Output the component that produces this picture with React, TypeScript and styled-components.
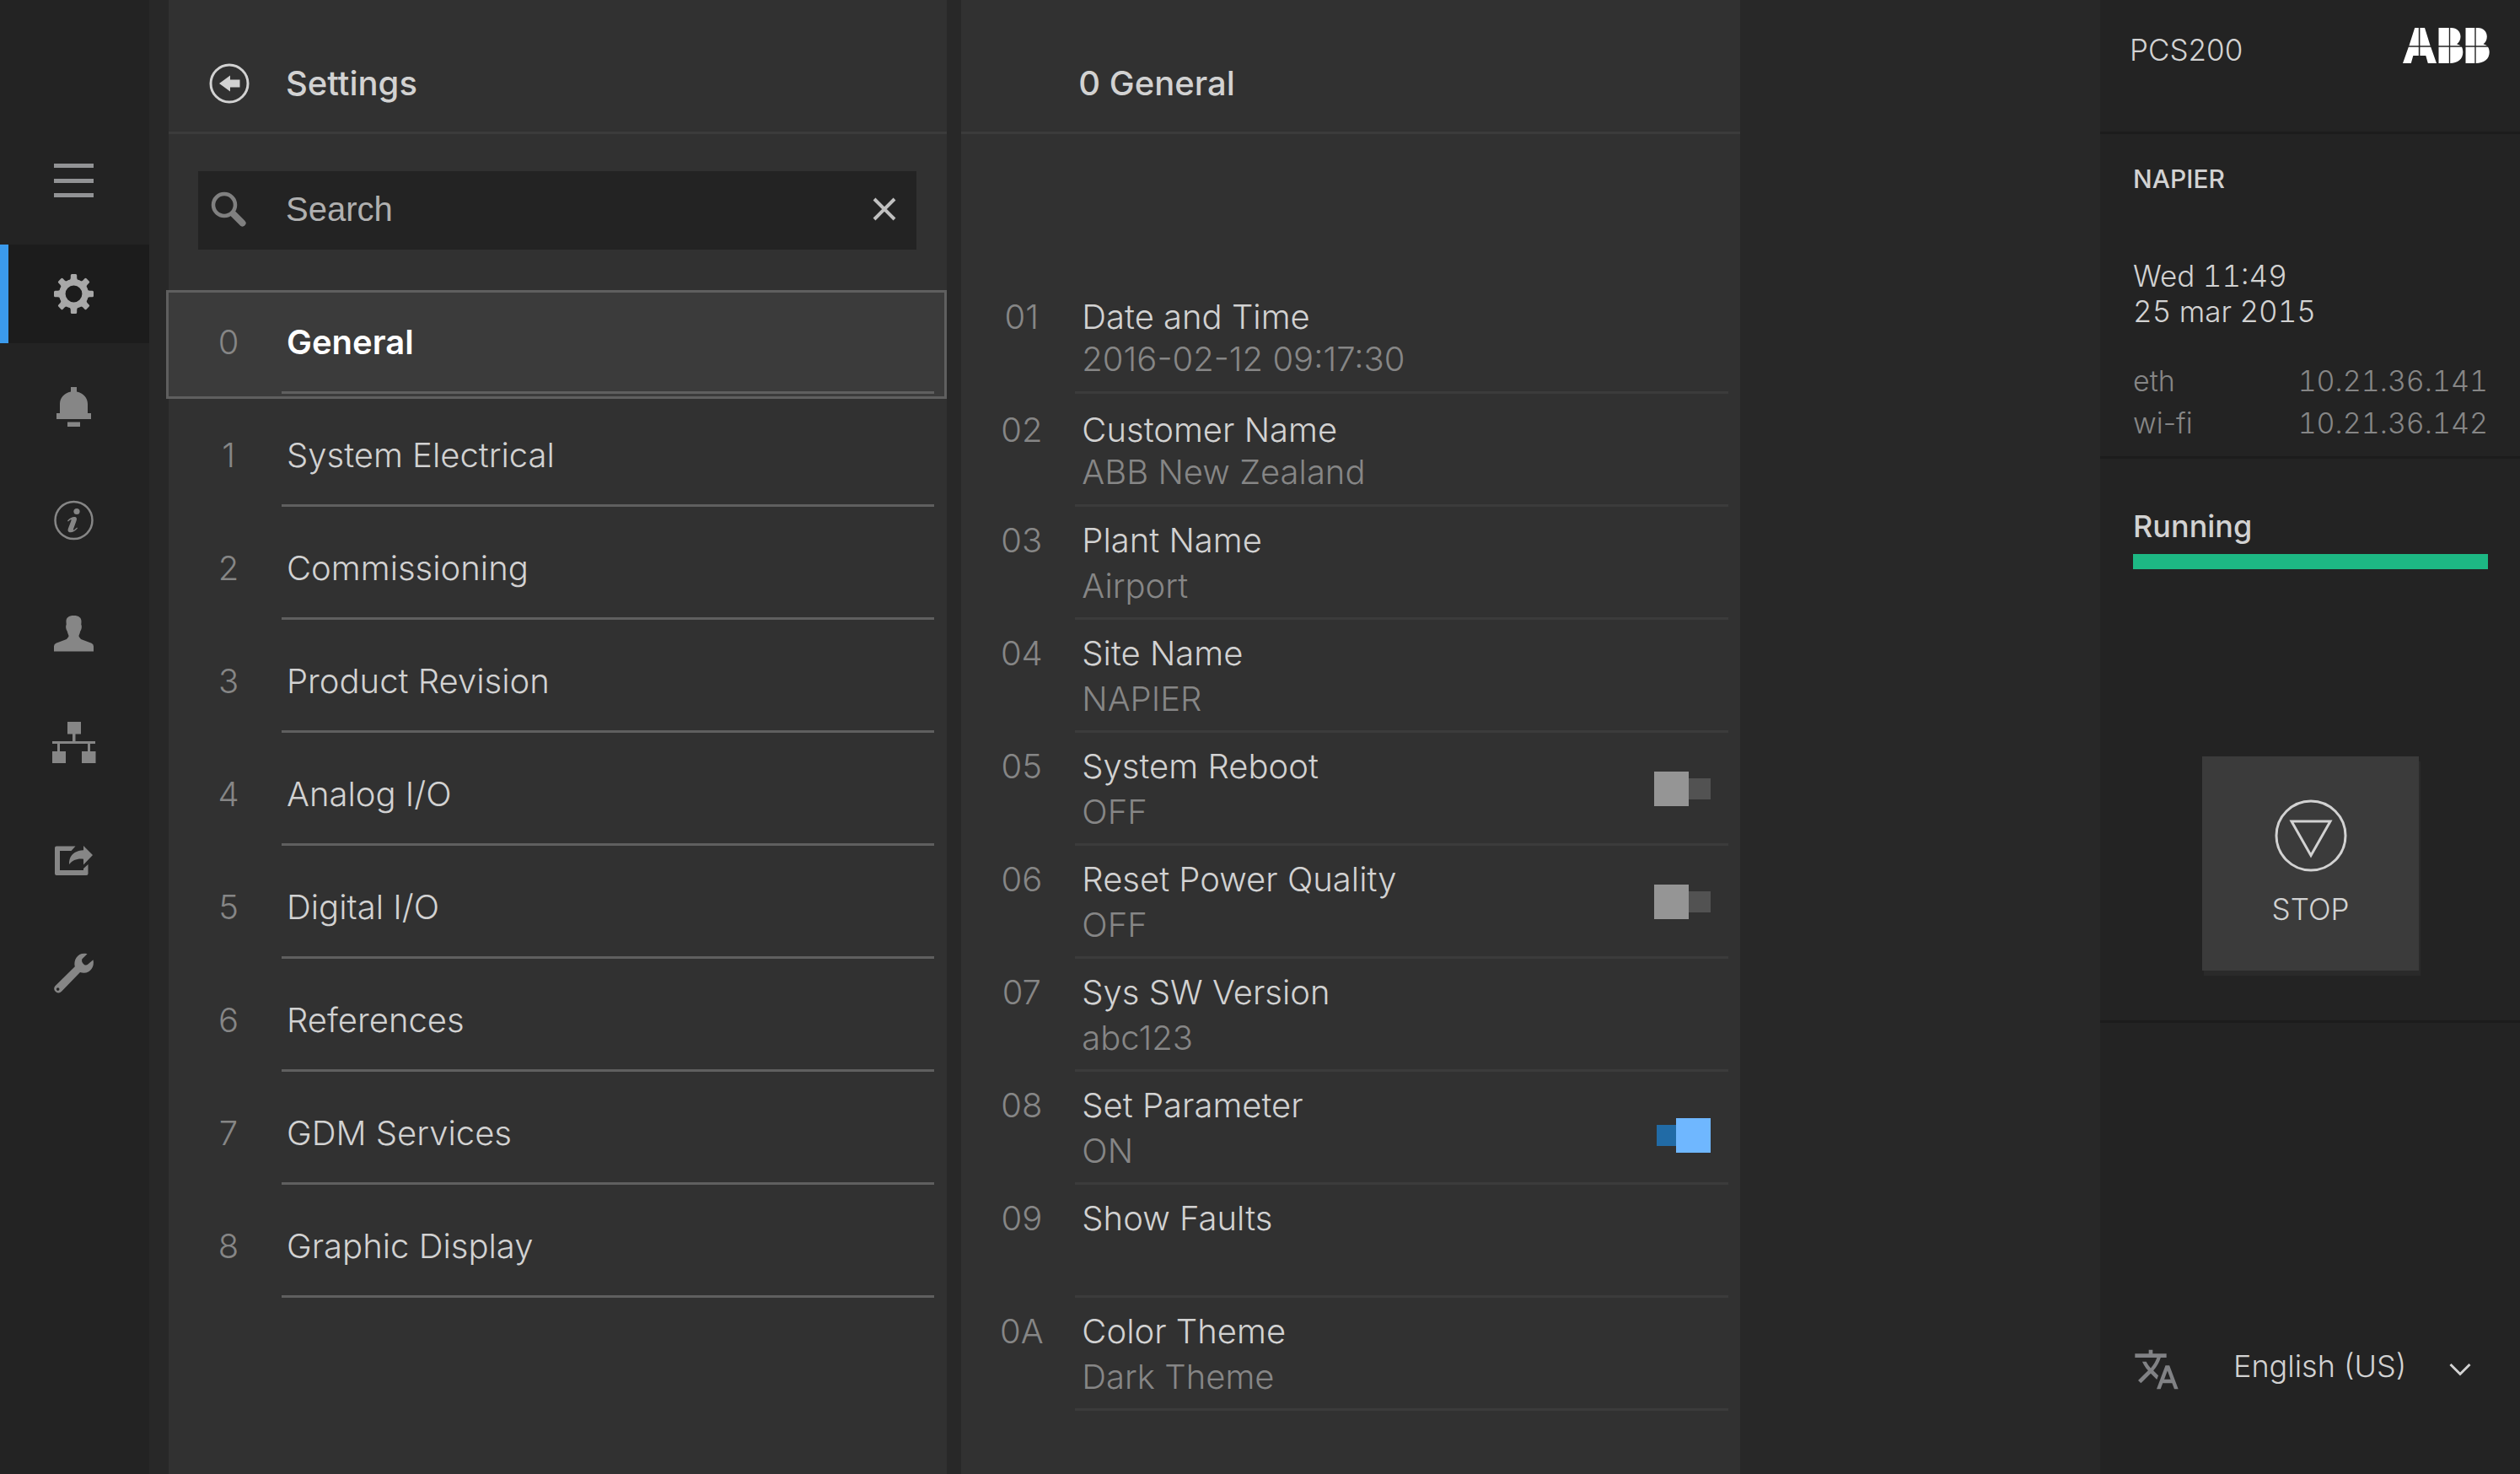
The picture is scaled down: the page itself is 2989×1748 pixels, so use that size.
import React, { useState } from "react";
import styled, { createGlobalStyle, css } from "styled-components";
import { MdTranslate } from "react-icons/md";

const color = {
  page: "#282828",
  rail: "#232323",
  railActive: "#1c1c1c",
  panel: "#313131",
  raised: "#3b3b3b",
  line: "#5f5f5f",
  text: "#d2d2d2",
  muted: "#868686",
  icon: "#868686",
  accent: "#3b9aec",
  ok: "#1db884",
};

const GlobalStyle = createGlobalStyle`
  *, *::before, *::after { box-sizing: border-box; }
  body {
    margin: 0;
    background: ${color.page};
    color: ${color.text};
    font-family: Inter, "Liberation Sans", sans-serif;
    font-size: 40px;
    font-weight: 300;
    line-height: 48px;
  }
  h1, h2, p, ul, dl, dd { margin: 0; padding: 0; }
  ul { list-style: none; }
  button, input, select { font: inherit; color: inherit; }
  button { border: 0; padding: 0; background: none; cursor: pointer; }
`;

const Shell = styled.div`
  display: grid;
  grid-template-columns: 177px minmax(0, 1fr) 498px;
  min-height: 100vh;
`;

/* ---------- navigation rail ---------- */

const Rail = styled.nav`
  display: flex;
  flex-direction: column;
  gap: 17px;
  padding-top: 156px;
  background: ${color.rail};
`;

const RailButton = styled.button<{ $active?: boolean }>`
  display: flex;
  align-items: center;
  justify-content: center;
  height: 117px;
  color: ${(p) => (p.$active ? "#a8a8a8" : color.icon)};
  ${(p) =>
    p.$active &&
    css`
      background: ${color.railActive};
      box-shadow: inset 10px 0 ${color.accent};
    `}
`;

const RailSvg = styled.svg.attrs({ viewBox: "0 0 57 57", "aria-hidden": true })`
  width: 57px;
  height: 57px;
  fill: currentColor;
`;

const MenuIcon = () => (
  <RailSvg>
    <path fill="#929395" d="M4 8h47v5H4zM4 26h47v5H4zM4 43h47v5H4z" />
  </RailSvg>
);

const GearIcon = () => (
  <RailSvg>
    <circle cx="27.5" cy="28.5" r="13.7" fill="none" stroke="currentColor" strokeWidth="7.6" />
    {[0, 45, 90, 135, 180, 225, 270, 315].map((a) => (
      <path
        key={a}
        d="M21.5 13.5Q23.8 12 23.8 9.500V6.500Q23.800 5 25.300 5H29.700Q31.200 5 31.200 6.500V9.500Q31.200 12 33.500 13.500Z"
        transform={`rotate(${a} 27.5 28.5)`}
      />
    ))}
  </RailSvg>
);

const BellIcon = () => (
  <RailSvg>
    <path d="M24 5h7v5.500C39 12 44 18 44 25V36h4v7H7v-7h4V25C11 18 16 12 24 10.500zM20 46.500h15V52H20z" />
  </RailSvg>
);

const InfoIcon = () => (
  <RailSvg>
    <circle cx="27.500" cy="29" r="22" fill="none" stroke="currentColor" strokeWidth="2.500" />
    <circle cx="31" cy="18.500" r="3.600" />
    <path d="M20 29.500C22.500 26.500 25.500 25 28 25C31 25 31.500 27 30.600 29.600L27 39.500C26.600 40.700 27.400 40.800 28.400 40L31.300 37.600L32 38.500C29.400 41.600 26.500 43.300 23.700 43.300C20.800 43.300 20 41.400 20.900 38.800L24.500 29.300C24.900 28.100 24.300 27.900 23.300 28.600L20.800 30.500Z" />
  </RailSvg>
);

const PersonIcon = () => (
  <RailSvg>
    <path d="M27.500 8C34 8 36.800 11 36.500 15.500L36.300 18.800C37.300 20 37 24 35.300 26.500C34.800 28.500 34.300 30 33.600 31.500V33L36 36L48.500 40.800Q51 42 51 44.500V50.500H4V44.500Q4 42 6.500 40.800L19 36L21.400 33V31.500C20.700 30 20.200 28.500 19.700 26.500C18 24 17.700 20 18.700 18.800L18.500 15.500C18.200 11 21 8 27.500 8Z" />
  </RailSvg>
);

const NetworkIcon = () => (
  <RailSvg>
    <path d="M20 0h16v14.500h-6.500V23H53v3h-6v9h6.500v14H37V35h7v-9H11v9h7v14H2V35h6v-9H2v-3h24v-8.500h-6z" />
  </RailSvg>
);

const ShareIcon = () => (
  <RailSvg>
    <path d="M29.500 13.500L24.500 19H11V42H39V40L44.500 35V46Q44.500 48 42.500 48H7Q5 48 5 46V15.500Q5 13.500 7 13.500Z" />
    <path d="M39 13L50 24L39 35.500V28.700C31 28 26.500 30 22 35C21.500 25 28 18.500 39 18.200Z" />
  </RailSvg>
);

const WrenchIcon = () => (
  <RailSvg>
    <path
      fillRule="evenodd"
      d="M43.500 7.200L37.200 13.600Q36.500 18 40.200 20.200Q42.500 21 44.300 19.600L50.500 14.200C52.500 22.500 47 29.800 39.500 29.700Q37 29.700 35 28.900L13 51.700A5 5 0 0 1 5.200 45.500L28.800 22.300C26.800 13.500 33 4.500 43.500 7.200ZM8.700 47.300A1.800 1.800 0 1 0 8.700 50.900A1.800 1.800 0 1 0 8.700 47.300Z"
    />
  </RailSvg>
);

const railItems = [
  { label: "Menu", Icon: MenuIcon },
  { label: "Settings", Icon: GearIcon, active: true },
  { label: "Alarms", Icon: BellIcon },
  { label: "Information", Icon: InfoIcon },
  { label: "User", Icon: PersonIcon },
  { label: "Network", Icon: NetworkIcon },
  { label: "Export", Icon: ShareIcon },
  { label: "Service", Icon: WrenchIcon },
];

/* ---------- panels ---------- */

const Main = styled.main`
  display: grid;
  grid-template-columns: 9fr 9fr 4fr;
  column-gap: 17px;
  padding-left: 23px;
`;

const Panel = styled.section`
  min-width: 0;
  background: ${color.panel};
`;

const PanelHeader = styled.header`
  display: grid;
  grid-template-columns: 139px 1fr;
  align-items: center;
  height: 159px;
  padding-top: 41px;
  border-bottom: 3px solid ${color.raised};
`;

const PanelTitle = styled.h1`
  grid-column: 2;
  font-size: 40px;
  font-weight: 500;
  line-height: 48px;
`;

const BackButton = styled.button`
  display: flex;
  justify-self: center;
  margin-left: 4px;
`;

const SearchBox = styled.label`
  display: grid;
  grid-template-columns: 104px 1fr 76px;
  align-items: center;
  height: 93px;
  margin: 44px 36px 48px 35px;
  padding-bottom: 3px;
  background: ${color.rail};
`;

const SearchInput = styled.input`
  min-width: 0;
  border: 0;
  padding: 0;
  outline: 0;
  background: none;
  font-family: "Liberation Sans", Arial, sans-serif;
  font-weight: 400;
  color: #b0b0b0;
  &::placeholder {
    color: #b0b0b0;
    opacity: 1;
  }
`;

const SearchGlyph = styled.svg`
  width: 42px;
  height: 42px;
  margin-left: 15px;
  color: #808080;
`;

const ClearButton = styled.button`
  display: flex;
  justify-content: center;
  color: #c0c0c0;
`;

const GroupList = styled.ul`
  display: flex;
  flex-direction: column;
  gap: 5px;
`;

const GroupItem = styled.li`
  display: flex;
  margin-left: -3px;
`;

const GroupButton = styled.button<{ $active: boolean }>`
  display: grid;
  grid-template-columns: 134px 1fr;
  flex: 1;
  height: 129px;
  padding: 0 12px 3px 0;
  border: 3px solid ${(p) => (p.$active ? color.line : "transparent")};
  background: ${(p) => (p.$active ? color.raised : "none")};
  text-align: left;
`;

const Code = styled.span`
  padding-left: 8px;
  text-align: center;
  color: ${color.muted};
`;

const GroupCode = styled(Code)`
  align-self: center;
  padding-bottom: 3px;
`;

const GroupLabel = styled.span<{ $active: boolean }>`
  display: flex;
  align-items: center;
  padding-left: 6px;
  border-bottom: 3px solid ${color.line};
  ${(p) =>
    p.$active &&
    css`
      color: #fff;
      font-weight: 600;
    `}
`;

const ParamList = styled.ul`
  padding-top: 174px;
`;

const ParamRow = styled.li<{ $tight?: boolean }>`
  display: grid;
  grid-template-columns: 135px 1fr;
  height: 134px;
  padding-right: 14px;
  line-height: ${(p) => (p.$tight ? "50px" : "54px")};
  & > * {
    padding-top: ${(p) => (p.$tight ? "18px" : "13px")};
  }
`;

const ParamBody = styled.div`
  display: flex;
  justify-content: space-between;
  padding-left: 8px;
  padding-right: 21px;
  border-bottom: 3px solid ${color.raised};
`;

const ParamValue = styled.p`
  color: ${color.muted};
`;

const Switch = styled.input.attrs({ type: "checkbox", role: "switch" })`
  appearance: none;
  display: flex;
  align-items: center;
  justify-content: flex-start;
  width: 67px;
  height: 41px;
  margin: 33px 0 0;
  background: linear-gradient(#525252, #525252) right center / 64px 25px no-repeat;
  &::before {
    content: "";
    width: 41px;
    height: 41px;
    background: #959595;
  }
  &:checked {
    justify-content: flex-end;
    margin-top: 42px;
    background-image: linear-gradient(#216ba6, #216ba6);
  }
  &:checked::before {
    background: #6fb7ff;
  }
`;

/* ---------- status column ---------- */

const Status = styled.aside`
  display: flex;
  flex-direction: column;
  background: ${color.rail};
  font-size: 35px;
  line-height: 42px;
`;

const Block = styled.section`
  padding: 0 38px 0 39px;
  border-bottom: 3px solid ${color.railActive};
`;

const Brand = styled(Block)`
  display: flex;
  justify-content: space-between;
  align-items: flex-start;
  height: 159px;
  padding: 33px 36px 0 35px;
`;

const ProductName = styled.p`
  padding-top: 5px;
`;

const SiteInfo = styled(Block)`
  height: 385px;
  padding-top: 32px;
`;

const SiteName = styled.h2`
  font-size: 30px;
  font-weight: 500;
  line-height: 42px;
`;

const Clock = styled.p`
  padding-top: 73px;
  font-variant-numeric: tabular-nums;
`;

const Addresses = styled.dl`
  display: grid;
  grid-template-columns: auto auto;
  justify-content: space-between;
  padding-top: 37px;
  font-size: 34px;
  line-height: 50px;
  color: ${color.muted};
`;

const Address = styled.dd`
  font-variant-numeric: tabular-nums;
`;

const RunBlock = styled(Block)`
  height: 669px;
  padding-top: 59px;
`;

const RunState = styled.h2`
  font-size: 36px;
  font-weight: 500;
  line-height: 42px;
`;

const RunBar = styled.div`
  height: 18px;
  margin: 12px 0 222px;
  background: ${color.ok};
`;

const StopButton = styled.button`
  display: flex;
  flex-direction: column;
  align-items: center;
  gap: 23px;
  width: 257px;
  height: 254px;
  margin: 0 auto;
  padding-top: 51px;
  background: ${color.raised};
  box-shadow: 2px 6px #2a2a2a;
`;

const LanguageField = styled.div`
  display: grid;
  grid-template-columns: 119px 1fr 26px;
  align-items: center;
  margin-top: auto;
  padding: 0 58px 96px 39px;
`;

const LanguageLabel = styled.label`
  display: flex;
  grid-area: 1 / 1;
  color: #818285;
`;

const LanguageSelect = styled.select`
  grid-area: 1 / 2 / 2 / 4;
  align-self: start;
  appearance: none;
  border: 0;
  padding: 0;
  background: none;
  font-size: 36px;
  line-height: 48px;
`;

const Chevron = styled.svg`
  grid-area: 1 / 3;
  width: 26px;
  height: 16px;
  pointer-events: none;
`;

const AbbLogo = () => (
  <svg width="103" height="42" viewBox="0 0 103 42" role="img" aria-label="ABB">
    <g fill="#fff">
      <path d="M0 42L6.800 22.800H18.800V33H12.300L9.800 42ZM7.400 21.200L14.200 0H18.800V21.200Z" />
      <path d="M40 42L33.200 22.800H20.400V33H27.300L29.800 42ZM32.600 21.200L26 0H20.400V21.200Z" />
      <path d="M42.500 0H54.800V21.200H42.500ZM42.500 22.800H54.800V42H42.500Z" />
      <path d="M56.200 0H57.500C64 0 68.500 4.500 68.500 10.500C68.500 14.500 66.500 17.500 64 19.200Q67 20 68.500 21.200H56.200ZM56.200 22.800H70C71 25 71.300 27 71.300 29C71.300 37 65 42 56.200 42Z" />
      <path d="M74.500 0H85.300V21.200H74.500ZM74.500 22.800H85.300V42H74.500Z" />
      <path d="M86.700 0H89C95.500 0 99.800 4.500 99.800 10.500C99.800 14.500 98 17.500 95.500 19.200Q98.500 20 100 21.200H86.700ZM86.700 22.800H101C102.300 25 102.700 27 102.700 29C102.700 37 96 42 86.700 42Z" />
    </g>
  </svg>
);

const groups = [
  "General",
  "System Electrical",
  "Commissioning",
  "Product Revision",
  "Analog I/O",
  "Digital I/O",
  "References",
  "GDM Services",
  "Graphic Display",
];

type Param = { code: string; name: string; value?: string; on?: boolean };

const initialParams: Param[] = [
  { code: "01", name: "Date and Time", value: "2016-02-12 09:17:30" },
  { code: "02", name: "Customer Name", value: "ABB New Zealand" },
  { code: "03", name: "Plant Name", value: "Airport" },
  { code: "04", name: "Site Name", value: "NAPIER" },
  { code: "05", name: "System Reboot", on: false },
  { code: "06", name: "Reset Power Quality", on: false },
  { code: "07", name: "Sys SW Version", value: "abc123" },
  { code: "08", name: "Set Parameter", on: true },
  { code: "09", name: "Show Faults" },
  { code: "0A", name: "Color Theme", value: "Dark Theme" },
];

export default function App() {
  const [selected, setSelected] = useState(0);
  const [query, setQuery] = useState("");
  const [params, setParams] = useState(initialParams);

  const toggle = (code: string) =>
    setParams((all) => all.map((p) => (p.code === code ? { ...p, on: !p.on } : p)));

  return (
    <>
      <GlobalStyle />
      <Shell>
        <Rail aria-label="Main">
          {railItems.map(({ label, Icon, active }) => (
            <RailButton key={label} type="button" aria-label={label} $active={active}>
              <Icon />
            </RailButton>
          ))}
        </Rail>

        <Main>
          <Panel>
            <PanelHeader>
              <BackButton type="button" aria-label="Back">
                <svg width="48" height="48" viewBox="0 0 48 48" fill="currentColor">
                  <circle cx="24" cy="24" r="22" fill="none" stroke="currentColor" strokeWidth="3" />
                  <path d="M12 24L25 14.500V19.500H36.500V28.500H25V33.500Z" />
                </svg>
              </BackButton>
              <PanelTitle>Settings</PanelTitle>
            </PanelHeader>
            <SearchBox>
              <SearchGlyph viewBox="0 0 42 42" fill="none" stroke="currentColor" aria-hidden>
                <circle cx="16" cy="16" r="13" strokeWidth="4.500" />
                <path d="M27 27L37.500 37.500" strokeWidth="8" strokeLinecap="round" />
                <path d="M24 24L30 30" strokeWidth="5" />
              </SearchGlyph>
              <SearchInput
                type="text"
                aria-label="Search"
                placeholder="Search"
                value={query}
                onChange={(e) => setQuery(e.target.value)}
              />
              <ClearButton type="button" aria-label="Clear search" onClick={() => setQuery("")}>
                <svg width="28" height="28" viewBox="0 0 28 28" stroke="currentColor" strokeWidth="4">
                  <path d="M2 2L26 26M26 2L2 26" />
                </svg>
              </ClearButton>
            </SearchBox>
            <GroupList>
              {groups.map((name, i) => (
                <GroupItem key={name}>
                  <GroupButton type="button" $active={i === selected} onClick={() => setSelected(i)}>
                    <GroupCode>{i}</GroupCode>
                    <GroupLabel $active={i === selected}>{name}</GroupLabel>
                  </GroupButton>
                </GroupItem>
              ))}
            </GroupList>
          </Panel>

          <Panel>
            <PanelHeader>
              <PanelTitle as="h2">
                {selected} {groups[selected]}
              </PanelTitle>
            </PanelHeader>
            <ParamList>
              {params.map(({ code, name, value, on }, i) => (
                <ParamRow key={code} $tight={i < 2}>
                  <Code>{code}</Code>
                  <ParamBody>
                    <div>
                      {on === undefined ? (
                        <p>{name}</p>
                      ) : (
                        <label htmlFor={`param-${code}`}>{name}</label>
                      )}
                      <ParamValue>{on === undefined ? value : on ? "ON" : "OFF"}</ParamValue>
                    </div>
                    {on !== undefined && (
                      <Switch id={`param-${code}`} checked={on} onChange={() => toggle(code)} />
                    )}
                  </ParamBody>
                </ParamRow>
              ))}
            </ParamList>
          </Panel>
        </Main>

        <Status>
          <Brand as="header">
            <ProductName>PCS200</ProductName>
            <AbbLogo />
          </Brand>
          <SiteInfo>
            <SiteName>NAPIER</SiteName>
            <Clock>
              Wed 11:49
              <br />
              25 mar 2015
            </Clock>
            <Addresses>
              <dt>eth</dt>
              <Address>10.21.36.141</Address>
              <dt>wi-fi</dt>
              <Address>10.21.36.142</Address>
            </Addresses>
          </SiteInfo>
          <RunBlock>
            <RunState>Running</RunState>
            <RunBar />
            <StopButton type="button">
              <svg width="86" height="86" viewBox="0 0 86 86" fill="none" stroke="currentColor" strokeWidth="3">
                <circle cx="43" cy="43" r="41" />
                <path d="M20 26H66L43 66.500Z" />
              </svg>
              STOP
            </StopButton>
          </RunBlock>
          <LanguageField>
            <LanguageLabel htmlFor="language" aria-label="Language">
              <MdTranslate size={56} />
            </LanguageLabel>
            <LanguageSelect id="language" defaultValue="en-US">
              <option value="en-US">English (US)</option>
            </LanguageSelect>
            <Chevron viewBox="0 0 26 16" fill="none" stroke="currentColor" strokeWidth="3" aria-hidden>
              <path d="M1.500 2L13 13.500L24.500 2" />
            </Chevron>
          </LanguageField>
        </Status>
      </Shell>
    </>
  );
}
